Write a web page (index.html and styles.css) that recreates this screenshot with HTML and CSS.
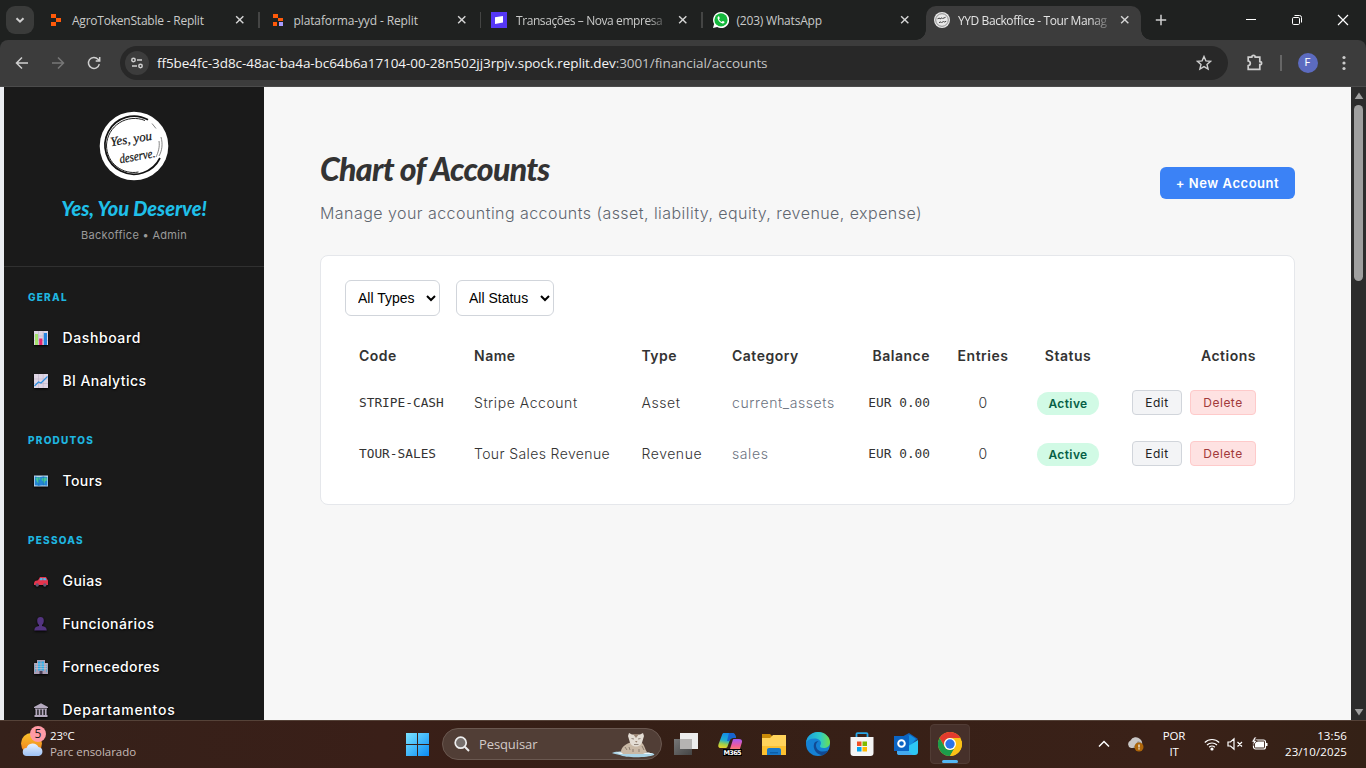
FILE: index.html
```html
<!DOCTYPE html>
<html lang="pt">
<head>
<meta charset="utf-8">
<title>YYD Backoffice - Tour Management</title>
<link rel="stylesheet" href="styles.css">
</head>
<body>
<header class="tabstrip">
  <button class="tab-search" aria-label="Search tabs"><svg width="12" height="12" viewBox="0 0 12 12"><path d="M2.5 4.2 6 7.7l3.5-3.5" class="ln w2"/></svg></button>
  <div class="tab">
    <svg class="fav" viewBox="0 0 16 16"><path fill="#ff5a0a" d="M3 2h5v4H3zM8 6h5v4H8zM3 10h5v4H3z"/></svg>
    <span class="tab-title t1">AgroTokenStable - Replit</span><svg class="x" viewBox="0 0 10 10"><path d="m1.2 1.2 7.6 7.6M8.8 1.2 1.2 8.8"/></svg>
  </div>
  <div class="tab">
    <svg class="fav" viewBox="0 0 16 16"><path fill="#ff5a0a" d="M3 2h5v4H3zM8 6h5v3H8zM3 10h4v4H3z"/><path fill="#a99bff" d="M9 10h4v4H9z"/></svg>
    <span class="tab-title t2">plataforma-yyd - Replit</span><svg class="x" viewBox="0 0 10 10"><path d="m1.2 1.2 7.6 7.6M8.8 1.2 1.2 8.8"/></svg>
  </div>
  <div class="tab">
    <svg class="fav" viewBox="0 0 16 16"><path fill="#5537f5" d="M0 0h16v16H0z"/><path fill="#fff" d="M4 5.2 12 4v6.500L4 12z"/></svg>
    <span class="tab-title t3 fade">Transações – Nova empresa</span><svg class="x" viewBox="0 0 10 10"><path d="m1.2 1.2 7.6 7.6M8.8 1.2 1.2 8.800"/></svg>
  </div>
  <div class="tab">
    <svg class="fav" viewBox="0 0 16 16"><path fill="#fff" d="M8 0a8 8 0 0 0-6.900 12L0 16l4.200-1.100A8 8 0 1 0 8 0z"/><circle cx="8" cy="7.900" r="6.600" fill="#14b83c"/><path fill="#fff" d="M5.500 4.200c-.8.4-1.200 1.300-.8 2.500.8 2.400 2.500 4 4.800 4.700 1 .3 2-.3 2.100-1.300 0-.4-1.700-1.200-2-1l-.8.9C7.500 9.500 6.500 8.500 6 7.300l.7-.8c.2-.3-.5-2.200-.8-2.300z"/></svg>
    <span class="tab-title t4">(203) WhatsApp</span><svg class="x" viewBox="0 0 10 10"><path d="m1.2 1.2 7.6 7.6M8.8 1.2 1.2 8.8"/></svg>
  </div>
  <div class="tab active">
    <svg class="fav" viewBox="0 0 16 16"><circle cx="8" cy="8" r="8" fill="#e8e8e8"/><circle cx="8" cy="8" r="6.300" fill="none" stroke="#777" stroke-width=".8"/><path d="m3.500 6.800 2-.8.500 1 2-1.200.6.700 3-1.200M5 10.600l2-.7.600.6 2-1 .6.600 2-.8" fill="none" stroke="#444"/></svg>
    <span class="tab-title t5 fade">YYD Backoffice - Tour Manag</span><svg class="x" viewBox="0 0 10 10"><path d="m1.2 1.2 7.6 7.6M8.800 1.200 1.200 8.800"/></svg>
  </div>
  <svg class="plus" width="12" height="12" viewBox="0 0 12 12"><path d="M6 .8v10.400M.8 6h10.400" class="ln w15"/></svg>
  <div class="wincontrols">
    <svg width="46" height="40" viewBox="0 0 46 40"><path d="M18 19.500h10" class="wl"/></svg>
    <svg width="46" height="40" viewBox="0 0 46 40"><rect x="18.500" y="17.500" width="7" height="7" rx="1.200" class="wl"/><path d="M20.500 15.500h5a2 2 0 0 1 2 2v5" class="wl"/></svg>
    <svg width="46" height="40" viewBox="0 0 46 40"><path d="m18 15 10 10M28 15 18 25" class="wl w12"/></svg>
  </div>
</header>

<div class="toolbar">
  <svg class="nav-ic" viewBox="0 0 16 16"><path d="M14 8H2.500M8 2.500 2.500 8 8 13.500" class="ln w15"/></svg>
  <svg class="nav-ic dim" viewBox="0 0 16 16"><path d="M2 8h11.500M8 2.500 13.500 8 8 13.500" class="ln w15"/></svg>
  <svg class="nav-ic" viewBox="0 0 16 16"><path d="M13.300 9.200A5.500 5.500 0 1 1 12 4.200l1.500 1.600M13.700 2v4h-4" class="ln w15"/></svg>
  <div class="omnibox">
    <span class="site-info"><svg width="14" height="14" viewBox="0 0 14 14"><circle cx="3.500" cy="4" r="1.700" class="ln w15"/><path d="M7 4h5M2 10h5" class="ln w15"/><circle cx="10.500" cy="10" r="1.700" class="ln w15"/></svg></span>
    <span class="url">ff5be4fc-3d8c-48ac-ba4a-bc64b6a17104-00-28n502jj3rpjv.spock.replit.dev<span class="path">:3001/financial/accounts</span></span>
    <svg class="star" width="16" height="16" viewBox="0 0 16 16"><path d="m8 1.500 1.900 4.400 4.700.4-3.600 3.100 1.100 4.700L8 11.600l-4.100 2.500L5 9.400 1.400 6.300l4.700-.4z" class="ln w14"/></svg>
  </div>
  <svg class="puzzle" width="18" height="18" viewBox="0 0 18 18"><path d="M2.200 3.200h3.600c0-2.400 3.400-2.400 3.400 0h4.600v4.500c2.400 0 2.400 3 0 3v4.600H2.200v-3.600c2.800-.4 2.800-4.400 0-4.700z" class="ln w17"/></svg>
  <span class="bar"></span>
  <span class="avatar">F</span>
  <svg class="dots" width="4" height="16" viewBox="0 0 4 16"><g fill="#ccc"><circle cx="2" cy="2.500" r="1.600"/><circle cx="2" cy="8" r="1.600"/><circle cx="2" cy="13.500" r="1.600"/></g></svg>
</div>

<div class="viewport">
  <aside class="sidebar">
    <div class="brand">
      <svg class="logo" width="70" height="70" viewBox="0 0 70 70">
        <circle cx="35" cy="35" r="34.300" fill="#fff"/>
        <path d="M49 8.800A29 29 0 1 0 61 47" fill="none" stroke="#111" stroke-width="1.700"/>
        <path d="M46 9.500A28 28 0 0 0 7.500 34c0 19 17 30 32 27" fill="none" stroke="#222" stroke-width="1"/>
        <path d="M53 12.500l4 5M62 26c2 7 1 14-2 19M60 30c1 6-1 12-3 16" fill="none" stroke="#666" stroke-width=".8"/>
        <g class="logo-text"><text transform="rotate(-9 14 35)" x="12" y="35" textLength="42">Yes, you</text><text transform="rotate(-10 23 51)" x="21" y="52" textLength="36" lengthAdjust="spacingAndGlyphs">deserve.</text></g>
      </svg>
      <div class="brand-name">Yes, You Deserve!</div>
      <div class="brand-sub">Backoffice • Admin</div>
    </div>
    <nav>
      <h3>GERAL</h3>
      <a class="item"><svg class="emo" viewBox="0 0 14 14"><path fill="#ded5e4" d="M0 0h14v14H0z"/><path stroke="#b9adc4" stroke-width=".5" d="M4.500 0v14M9.200 0v14M0 5h14M0 9.500h14"/><path fill="#a3e26c" d="M1 3h3v11H1z"/><path fill="#e6266e" d="M5.200 7.500h3.200V14H5.200z"/><path fill="#2584e0" d="M9.800 2H13v12H9.800z"/></svg><span class="n1">Dashboard</span></a>
      <a class="item"><svg class="emo" viewBox="0 0 14 14"><path fill="#ded5e4" d="M0 0h14v14H0z"/><path stroke="#b9adc4" stroke-width=".5" d="M4.500 0v14M9.200 0v14M0 5h14M0 9.500h14"/><path fill="none" stroke="#2b8fe0" stroke-width="1.200" d="m.5 12 4-4 2.500 1L13.500 2.500"/></svg><span class="n2">BI Analytics</span></a>
      <h3>PRODUTOS</h3>
      <a class="item"><svg class="emo" viewBox="0 0 14 14"><path fill="#b9d5ec" d="M0 1.500h14v11H0z"/><path fill="#2385d5" d="m.8 2.500 4 .7 4.500-.7 4 .6v8.700l-4-.6-4.500.6-4-.6z"/><path fill="#43c59a" d="m1.500 4 4-1 1 2-2 1.500.5 3L3 8zM8 4l4.500-.5.5 3-2 .8-.8 3L9 7.500 7.500 6z"/><path stroke="#1668aa" stroke-width=".5" d="M4.800 3v9M9.300 2.500v9"/></svg><span class="n3">Tours</span></a>
      <h3>PESSOAS</h3>
      <a class="item"><svg class="emo" viewBox="0 0 14 14"><path fill="#e5344d" d="m0 9 1-2 3-.8L6 3h6l2 3.500V11H0z"/><path fill="#54b8e8" d="m5.300 6.200 1.200-2.300h2v2.300zM9.300 3.900h2.200l1.200 2.300H9.300z"/><circle cx="3.200" cy="11" r="1.700" fill="#675774"/><circle cx="10.800" cy="11" r="1.700" fill="#675774"/></svg><span class="n4">Guias</span></a>
      <a class="item"><svg class="emo" viewBox="0 0 14 14"><path fill="#533480" d="M6.500 0C4.200 0 3 1.600 3.200 4c.1 1.900.7 3.200 1.800 4v1C2 9.500.5 10.500.3 13.500h12.500c-.2-3-1.800-4-4.800-4.500V8c1.100-.8 1.700-2.100 1.800-4C10 1.600 8.800 0 6.500 0z"/></svg><span class="n5">Funcionários</span></a>
      <a class="item"><svg class="emo" viewBox="0 0 14 14"><path fill="#a99db4" d="M0 3h3V0h8v3h3v11H0z"/><path fill="#2bace8" d="M4 1.500h2.500v9H4zM7.500 1.500H10v9H7.500z"/><path fill="#5ba9cf" d="M1 4.500h1V12H1zM12 4.500h1V12h-1z"/><path stroke="#d4d0dc" stroke-width=".6" d="M1 4h12M1 6.300h12M1 8.600h12"/><path fill="#4a3d55" d="M5.500 11h3v3h-3z"/></svg><span class="n6">Fornecedores</span></a>
      <a class="item"><svg class="emo" viewBox="0 0 14 14"><path fill="#b5aabf" d="M0 4 7 .300 14 4v1H0zM1 5.500h12v1H1zM1.500 6.500h1.800V12H1.500zM4.600 6.500h1.800V12H4.600zM7.700 6.500h1.800V12H7.700zM10.800 6.500h1.800V12h-1.800zM.5 12h13v2H.5z"/></svg><span class="n7">Departamentos</span></a>
    </nav>
  </aside>

  <main>
    <div class="page-head">
      <div>
        <h1>Chart of Accounts</h1>
        <p class="lead">Manage your accounting accounts (asset, liability, equity, revenue, expense)</p>
      </div>
      <button class="primary">+ New Account</button>
    </div>
    <section class="card">
      <div class="filters">
        <select class="types"><option>All Types</option></select>
        <select class="status"><option>All Status</option></select>
      </div>
      <table>
        <colgroup><col class="c1"><col class="c2"><col class="c3"><col class="c4"><col class="c5"><col class="c6"><col class="c7"><col class="c8"></colgroup>
        <thead><tr><th>Code</th><th>Name</th><th>Type</th><th>Category</th><th class="r">Balance</th><th class="c">Entries</th><th class="c">Status</th><th class="r">Actions</th></tr></thead>
        <tbody>
          <tr><td class="mono">STRIPE-CASH</td><td class="wide">Stripe Account</td><td class="wide">Asset</td><td class="muted">current_assets</td><td class="mono r">EUR 0.00</td><td class="c">0</td><td class="c"><span class="badge">Active</span></td><td><div class="actions"><button class="edit">Edit</button><button class="delete">Delete</button></div></td></tr>
          <tr><td class="mono">TOUR-SALES</td><td>Tour Sales Revenue</td><td class="wide">Revenue</td><td class="muted">sales</td><td class="mono r">EUR 0.00</td><td class="c">0</td><td class="c"><span class="badge">Active</span></td><td><div class="actions"><button class="edit">Edit</button><button class="delete">Delete</button></div></td></tr>
        </tbody>
      </table>
    </section>
  </main>
  <div class="scrollbar">
    <svg width="10" height="8" viewBox="0 0 10 8"><path d="M5 .5 9.300 7H.7z"/></svg>
    <div class="thumb"></div>
    <svg width="10" height="8" viewBox="0 0 10 8"><path d="M.7 1h8.600L5 7.500z"/></svg>
  </div>
</div>

<footer class="taskbar">
  <div class="weather">
    <svg width="28" height="34" viewBox="0 0 28 34"><defs><linearGradient id="sun" x2="0" y2="1"><stop stop-color="#f9c22b"/><stop offset="1" stop-color="#f07a1c"/></linearGradient><linearGradient id="cld" x2="0" y2="1"><stop stop-color="#e8f1ff"/><stop offset="1" stop-color="#9dc1f5"/></linearGradient></defs><circle cx="11.500" cy="17.500" r="10.500" fill="url(#sun)"/><path fill="url(#cld)" d="M7 30a4 4 0 0 1-.5-8 6.500 6.500 0 0 1 12-1A4.600 4.600 0 0 1 19 30z"/><circle cx="18" cy="8" r="8" fill="#ff9aa5"/><text x="18" y="12.200" class="num">5</text></svg>
    <div class="wtext"><div>23°C</div><div class="wsub">Parc ensolarado</div></div>
  </div>
  <div class="apps">
    <svg class="start" width="24" height="24" viewBox="0 0 24 24"><defs><linearGradient id="win" x2="1" y2="1"><stop stop-color="#7be3ff"/><stop offset="1" stop-color="#0a8cf5"/></linearGradient></defs><path fill="url(#win)" d="M1 1h11v11H1zM13 1h11v11H13zM1 13h11v11H1zM13 13h11v11H13z"/></svg>
    <div class="search">
      <svg width="16" height="16" viewBox="0 0 16 16"><circle cx="6.700" cy="6.700" r="5.500" fill="#77706d" stroke="#eee" stroke-width="1.700"/><path d="m10.800 10.800 4.200 4.200" stroke="#eee" stroke-width="2"/></svg>
      <span>Pesquisar</span>
      <svg class="tiger" width="44" height="26" viewBox="0 0 44 26"><path fill="#a9d3e6" d="M1 21c3-2 9-1 12-2l26 2c3 0 5 1 4 2-7 3-29 3-34 0-3-1-7-1-8-2z"/><path fill="#edf7fb" d="M5 20.500h33l4 1.500H9z"/><path fill="#c9b8a5" d="M10 20c0-4 3-7 8-9l3-1h9c4 3 4 8 6 10l-4 2H12z"/><path fill="#e4ddd4" d="m18 1 3 1.500h8L32 1l1 3-1.500 5c-1 4-3.500 5.500-6.500 5.500S19.500 13 18.500 9L17 4z"/><path fill="#9a8474" d="m22 2 3 4 3-4zM24 9h2.500l-1.200 1.800z"/><path stroke="#6f6056" stroke-width=".7" fill="none" d="m20.500 6.500 2.500.5M29.500 6.500 27 7M14 15l2 3M18 15l1 3M31 14l2 4M23 12.500h4.500M22 17v3M28 17v3"/></svg>
    </div>
    <svg class="app" viewBox="0 0 24 24"><defs><linearGradient id="tv" x2="1" y2="1"><stop stop-color="#777"/><stop offset="1" stop-color="#444"/></linearGradient></defs><path fill="#ececec" d="M6 1h18v16H6z"/><path fill="url(#tv)" d="M0 7h18v16H0z"/><path fill="#b5b3b2" d="M6 7h12v10H6z"/></svg>
    <svg class="app" viewBox="0 0 24 24"><defs><linearGradient id="ca" gradientUnits="userSpaceOnUse" x1="8" y1="1" x2="5" y2="17"><stop stop-color="#148ce8"/><stop offset=".45" stop-color="#1faed0"/><stop offset=".7" stop-color="#9fce4a"/><stop offset="1" stop-color="#f7d324"/></linearGradient><linearGradient id="cb" x2="0" y2="1"><stop stop-color="#a45cf5"/><stop offset=".5" stop-color="#ef5b9c"/><stop offset="1" stop-color="#ff9a4b"/></linearGradient></defs><path fill="url(#ca)" d="M6 1h8c2 0 3 1 3.500 3L18 6h-3c-2 0-3 1-3.500 3l-1.800 5c-.6 2-1.500 2-3 2H3c-3 0-3-2-2.400-4L4 3c.5-1.500 1-2 2-2z"/><path fill="#1763cf" d="M11 1h3c2 0 3 1 3.500 3L18 6h-3c-2 0-3 1-3.500 3L9 9z"/><path fill="url(#cb)" d="M16 7h5c3 0 3.500 2 2.700 4L21 20h-9c-1 0-.4-2 0-3l2.500-8c.4-1.400.700-2 1.500-2z"/><path fill="#000" d="M5 17h19v7H5z"/><text x="14.500" y="23" class="m365" textLength="18">M365</text></svg>
    <svg class="app" viewBox="0 0 24 24"><path fill="#c98a08" d="M0 2h8l2 2v5H0z"/><path fill="#ffd35b" d="M0 6h8l3-3h13v20H0z"/><path fill="#fbc02f" d="M0 14h24v9H0z"/><path fill="#1878c8" d="M5 23v-5c0-1.200.8-2 2-2h10c1.200 0 2 .8 2 2v5z"/><path fill="#0c5ea8" d="M8 20h8v1.500H8z"/></svg>
    <svg class="app" viewBox="0 0 24 24"><defs><linearGradient id="eg" x2="1"><stop stop-color="#199de0"/><stop offset=".6" stop-color="#2ecbc6"/><stop offset="1" stop-color="#6ee04b"/></linearGradient></defs><circle cx="12" cy="12" r="12" fill="#1581d4"/><path fill="url(#eg)" d="M0 11C.5 4 6 0 12 0c7 0 12 5 12 10 0 4-3 6-6.500 6-3 0-4-1.500-3.300-2.500.600-1 .8-1.800.8-2.500 0-2.500-3-4.500-6.500-4.500C4 6.500 1 8 0 11z"/><path fill="#114a94" d="M8 12c-1.500 5 3 11 8.500 11.200 2.500-.8 4.500-2.700 5.500-4.700-7 3-12-.5-12-5 0-2 1-3.500 2.500-4C10.500 9 8.600 10 8 12z"/></svg>
    <svg class="app" viewBox="0 0 24 24"><path fill="none" stroke="#27a6e8" stroke-width="1.800" d="M6.500 7V2c0-.6.3-.9 1-.9h9c.7 0 1 .3 1 .9v5"/><path fill="#f4f4f4" d="M.5 5h23v16a3 3 0 0 1-3 3h-17a3 3 0 0 1-3-3z"/><path fill="#f15024" d="M7 9.500h4.500V14H7z"/><path fill="#7fba00" d="M12.500 9.500H17V14h-4.500z"/><path fill="#03a4ef" d="M7 15h4.500v4.500H7z"/><path fill="#ffb900" d="M12.500 15H17v4.500h-4.500z"/></svg>
    <svg class="app" viewBox="0 0 24 24"><path fill="#0f62bd" d="M4 7 15 1l9 6-9 9z"/><path fill="#1490df" d="m7 7 9-4 6 4-7 8z"/><path fill="#2dc7f5" d="M24 8v12a3 3 0 0 1-3 3H5a3 3 0 0 1-2-2z"/><path fill="#44a9f0" d="M3 11v10c0 1 1 2 2 2h14z"/><path fill="#0b64c4" d="M0 4h15v15H0z"/><circle cx="7.500" cy="11.500" r="3.300" fill="none" stroke="#fff" stroke-width="2"/></svg>
    <div class="app-active"><svg class="app" viewBox="0 0 24 24"><circle cx="12" cy="12" r="12" fill="#fbc116"/><path fill="#e33b2e" d="M1.600 6A12 12 0 0 1 22.400 6H12a6 6 0 0 0-5.200 9z"/><path fill="#1c9c4b" d="M1.600 6l5.200 9A6 6 0 0 0 17.200 15L12 24A12 12 0 0 1 1.600 6z"/><path fill="#fbc116" d="M12 24l5.200-9a6 6 0 0 0 0-6H23.600A12 12 0 0 1 12 24z"/><circle cx="12" cy="12" r="6" fill="#fff"/><circle cx="12" cy="12" r="4.700" fill="#2a73e8"/></svg><i></i></div>
  </div>
  <div class="tray">
    <svg class="chev" width="12" height="8" viewBox="0 0 12 8"><path d="m1 6.500 5-5 5 5" class="wl w15"/></svg>
    <svg class="cloud" width="18" height="16" viewBox="0 0 18 16"><path fill="#c9c6c5" d="M4 12a4 4 0 0 1-.5-7.500A6 6 0 0 1 13 3c2 1.500 2.500 4 2 6l-5 3z"/><path fill="#999" d="m6 12 5-7 4 2v5z"/><circle cx="12" cy="11" r="4.500" fill="#ad6509"/><path stroke="#fff" stroke-width="1.200" d="M12 8.500v3M12 12.300v1.200"/></svg>
    <div class="lang">POR<br>IT</div>
    <svg class="wifi" width="16" height="14" viewBox="0 0 16 14"><path class="wl w12" d="M.8 5.500a10.200 10.200 0 0 1 14.400 0M3 8a7.200 7.200 0 0 1 10 0M5.200 10.300a4 4 0 0 1 5.600 0"/><circle cx="8" cy="12" r="1.600" fill="#fff"/></svg>
    <svg class="vol" width="16" height="14" viewBox="0 0 16 14"><path class="wl w12" d="M1 5h2.500L7 1.800v10.400L3.500 9H1zM10.500 5l4.500 4.500M15 5l-4.500 4.500"/></svg>
    <svg class="bat" width="17" height="14" viewBox="0 0 17 14"><rect x="2.500" y="3" width="12" height="9" rx="2" class="wl w12"/><path fill="#fff" d="M4 5.500 7 4.500h6v6H4zM15 6h1.500v3H15z"/><path fill="#fff" stroke="#39211a" stroke-width=".7" d="M3.500 0 .5 5h2l-.8 4L6 3.500H3.800L5.500 0z"/></svg>
    <div class="clock">13:56<br>23/10/2025</div>
  </div>
</footer>
</body>
</html>
```
FILE: styles.css
```css
* { box-sizing: border-box; }
body { margin: 0; width: 1366px; height: 768px; overflow: hidden; display: flex; flex-direction: column; font-family: Inter, sans-serif; background: #1f2120; }
svg { display: block; flex: none; }
button { font-family: inherit; padding: 0; }
.ln { fill: none; stroke: #cfcfcf; }
.wl { fill: none; stroke: #fff; stroke-width: 1; }
.w12 { stroke-width: 1.2; } .w14 { stroke-width: 1.4; } .w15 { stroke-width: 1.5; } .w17 { stroke-width: 1.7; } .w2 { stroke-width: 2; }

/* Browser chrome */
.tabstrip { height: 40px; flex: none; display: flex; background: #1f2120; padding-left: 6px; font: 12px "Open Sans", sans-serif; color: #c9cac9; }
.tab-search { width: 28px; height: 28px; margin: 6px 4px 0 0; border: 0; border-radius: 9px; background: #3a3b3a; display: grid; place-items: center; }
.tab { width: 221.5px; height: 28px; margin-top: 6px; padding-left: 10px; display: flex; align-items: center; flex: none; position: relative; }
.tab:nth-child(-n+4)::after { content: ""; position: absolute; right: 0; top: 6px; width: 1.5px; height: 16px; background: #444544; }
.fav { width: 16px; height: 16px; margin-right: 8px; }
.tab-title { width: 150px; white-space: nowrap; margin-right: 13px; }
.fade { -webkit-mask-image: linear-gradient(90deg, #000 88%, transparent 104%); mask-image: linear-gradient(90deg, #000 88%, transparent 104%); }
.x { width: 9.500px; height: 9.500px; } .x path { fill: none; stroke: #d5d5d5; stroke-width: 1.5; }
.t1 { letter-spacing: -.22px; } .t2 { letter-spacing: -.12px; } .t3 { letter-spacing: -.42px; padding-left: 1px; } .t4 { letter-spacing: -.2px; } .t5 { letter-spacing: -.42px; }
.active { width: 215px; height: 34px; margin-left: 2px; padding: 0 0 6px 8px; background: #3c3c3c; border-radius: 10px 10px 0 0; color: #e3e3e3; }
.active .tab-title { margin-right: 12px; }
.active::before, .active::after { content: ""; position: absolute; bottom: 0; width: 10px; height: 10px; }
.active::before { left: -10px; background: radial-gradient(circle at 0 0, transparent 9.500px, #3c3c3c 10px); }
.active::after { right: -10px; background: radial-gradient(circle at 100% 0, transparent 9.500px, #3c3c3c 10px); }
.plus { margin: 14px 0 0 14px; }
.wincontrols { display: flex; margin-left: auto; }
.toolbar { height: 47px; flex: none; display: flex; align-items: center; background: #3c3c3c; border-radius: 8px 8px 0 0; border-bottom: 1px solid #4b4b4b; padding-left: 14px; }
.nav-ic { width: 16px; height: 16px; margin-right: 20px; } .dim { opacity: .4; }
.omnibox { width: 1108px; height: 34px; margin-left: -2px; border-radius: 17px; background: #282828; display: flex; align-items: center; padding-left: 5px; }
.site-info { width: 24px; height: 24px; border-radius: 50%; background: #3c3c3c; display: grid; place-items: center; }
.url { margin-left: 8px; width: 1039px; font: 13.500px "Open Sans", sans-serif; color: #f4f4f4; letter-spacing: -.07px; white-space: nowrap; }
.path { color: #c5c5c5; }
.puzzle { margin-left: 18px; }
.bar { width: 1.500px; height: 16px; background: #666; margin-left: 16px; }
.avatar { width: 20px; height: 20px; margin-left: 16px; border-radius: 50%; background: #5c6bc0; color: #fff; font: 11px/20px Roboto, sans-serif; text-align: center; }
.dots { margin-left: 24px; }

/* Application */
.viewport { height: 633px; flex: none; display: flex; overflow: hidden; background: #f7f7f7; border-left: 4px solid #ebedf1; }
.sidebar { width: 260px; height: 633px; flex: none; overflow: hidden; background: #1a1a1a; }
.brand { height: 180px; padding-top: 24px; display: flex; flex-direction: column; align-items: center; border-bottom: 1px solid #303030; }
.logo-text text { font: italic 13px "Liberation Serif", serif; fill: #111; stroke: #111; stroke-width: .2; }
.brand-name { margin-top: 14px; font: italic 900 20px/27px Lato, sans-serif; color: #1fbfe8; white-space: nowrap; letter-spacing: -.05px; }
.brand-sub { margin-top: 5px; font-size: 11px; line-height: 17px; color: #9a9a9a; letter-spacing: .3px; }
nav { padding: 23px 24px 0; }
h3 { margin: 0; height: 14px; font-size: 10px; line-height: 14px; font-weight: 800; letter-spacing: 1.25px; color: #1fb6e0; }
.item + h3 { margin-top: 31px; }
.item { display: flex; align-items: center; height: 43px; padding-left: 6px; color: #fff; font-size: 14px; font-weight: 500; letter-spacing: .42px; text-shadow: 0 1px 2px #000; }
h3 + .item { margin-top: 12px; }
.n1 { letter-spacing: .6px; } .n5 { letter-spacing: .48px; } .n6 { letter-spacing: .4px; } .n7 { letter-spacing: .75px; }
.emo { width: 14px; height: 14px; margin-right: 14.500px; filter: drop-shadow(0 1px 1px #000); }
main { width: 1087px; padding: 56px; }
.page-head { height: 112px; display: flex; justify-content: space-between; align-items: flex-start; }
h1 { margin: 5px 0 0; font: italic 900 32px/42px Lato, sans-serif; color: #333; letter-spacing: -.72px; white-space: nowrap; }
.lead { margin: 11px 0 0; font-size: 16px; line-height: 24px; color: #5f666f; font-weight: 300; white-space: nowrap; letter-spacing: .45px; }
.primary { width: 135px; height: 32px; margin-top: 24px; border: 0; border-radius: 6px; background: #3b82f6; color: #fff; font-size: 13px; font-weight: 600; letter-spacing: .55px; flex: none; }
.card { width: 975px; height: 250px; background: #fff; border: 1px solid #e5e7eb; border-radius: 8px; padding: 24px; }
.filters { display: flex; gap: 16px; margin-bottom: 16px; }
select { height: 36px; padding: 8px; border: 1px solid #d1d5db; border-radius: 6px; background: #fff; color: #000; font: 14px "Liberation Sans", sans-serif; }
.types { width: 95px; } .status { width: 98px; }
table { width: 925px; table-layout: fixed; border-collapse: collapse; font-size: 14px; color: #333; font-weight: 300; letter-spacing: .38px; }
.c1 { width: 115px; } .c2 { width: 167.500px; } .c3 { width: 90.500px; } .c4 { width: 130px; } .c5 { width: 96px; } .c6 { width: 78px; } .c7 { width: 92px; } .c8 { width: 156px; }
th { height: 46px; padding: 0 14px; text-align: left; font-size: 14px; font-weight: 600; color: #333; letter-spacing: .5px; }
td { height: 51px; padding: 0 14px 2px; white-space: nowrap; }
th.c, td.c { text-align: center; padding-left: 0; padding-right: 0; }
th.r, td.r { text-align: right; padding-left: 0; }
.wide { letter-spacing: .55px; }
.mono { font: 12.800px "DejaVu Sans Mono", monospace; color: #333; letter-spacing: 0; }
.muted { color: #6b7280; letter-spacing: .6px; }
.badge { display: inline-block; width: 62px; height: 23px; margin-top: 2px; border-radius: 12px; background: #d1fae5; color: #065f46; font-size: 12px; line-height: 23px; font-weight: 600; letter-spacing: .4px; vertical-align: middle; }
.actions { display: flex; justify-content: flex-end; gap: 8px; }
.actions button { height: 25px; border: 1px solid #d1d5db; border-radius: 4px; font-size: 12px; letter-spacing: .5px; background: #f3f4f6; color: #222; }
.actions .edit { width: 50px; }
.actions .delete { width: 66px; background: #fee2e2; border-color: #fecaca; color: #a13a3a; }
.scrollbar { width: 15px; height: 633px; background: #2c2c2c; display: flex; flex-direction: column; align-items: center; padding: 5px 0 4px; }
.scrollbar path { fill: #9f9f9f; }
.thumb { width: 9px; height: 176px; border-radius: 5px; background: #9f9f9f; margin: 5px 0 auto; flex: none; }

/* Taskbar */
.taskbar { height: 48px; flex: none; display: flex; background: linear-gradient(90deg, #35211a, #3a1f18 28%, #351f16 45%, #3a2118 85%, #342116); border-top: 1px solid #554238; color: #fff; font: 11.500px/16px "Open Sans", sans-serif; }
.weather { width: 405px; display: flex; padding: 5px 0 0 20px; }
.num { font: 12px "Open Sans", sans-serif; fill: #222; text-anchor: middle; }
.wtext { margin: 2px 0 0 2px; letter-spacing: -.2px; } .wsub { color: #c5bab6; letter-spacing: -.05px; }
.apps { display: flex; align-items: center; height: 46px; }
.search { width: 220px; height: 32px; margin: 0 12px 0 13px; border: 1px solid #6a5850; border-radius: 16px; background: #513e36; display: flex; align-items: center; padding-left: 11px; color: #d3cbc8; font-size: 13px; }
.search span { margin-left: 9px; width: 59px; letter-spacing: -.1px; }
.tiger { margin-left: 73px; margin-bottom: -1px; }
.app { width: 24px; height: 24px; margin-right: 20px; }
.m365 { font: bold 6.500px "DejaVu Sans", sans-serif; fill: #fff; text-anchor: middle; }
.app-active { width: 40px; height: 40px; margin-left: -8px; border-radius: 4px; background: #46302a; border: 1px solid #513c35; display: flex; flex-direction: column; align-items: center; padding-top: 7px; }
.app-active .app { margin: 0; }
.app-active i { width: 16px; height: 3px; margin-top: 4px; border-radius: 2px; background: #52b7f5; flex: none; }
.tray { display: flex; align-items: center; margin-left: auto; padding-right: 19px; height: 46px; letter-spacing: -.15px; }
.cloud { margin-left: 17px; }
.lang { margin-left: 17px; width: 24px; text-align: center; }
.wifi { margin-left: 18px; } .vol { margin-left: 7px; } .bat { margin-left: 8px; }
.clock { width: 79px; text-align: right; white-space: nowrap; letter-spacing: .1px; }
```
